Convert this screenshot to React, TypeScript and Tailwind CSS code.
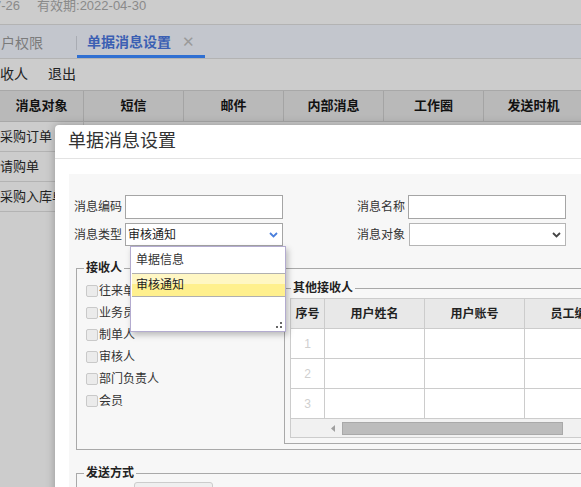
import React from "react";

function Chevron({ color }: { color: string }) {
  return (
    <svg width="9" height="6" viewBox="0 0 9 6" className="shrink-0">
      <path d="M1 1 L4.5 4.5 L8 1" fill="none" stroke={color} strokeWidth="1.8" />
    </svg>
  );
}

function Check({ label }: { label: string }) {
  return (
    <div className="h-[22px] flex items-center">
      <span className="w-[12px] h-[12px] rounded-[2px] border border-[#c9c9c9] bg-[#ebebeb] shrink-0" />
      <span className="ml-[1px] text-[12px] text-[#333] whitespace-nowrap">{label}</span>
    </div>
  );
}

export default function App() {
  const bgCols = [
    { t: "消息对象", w: "w-[84px]" },
    { t: "短信", w: "w-[100px]" },
    { t: "邮件", w: "w-[100px]" },
    { t: "内部消息", w: "w-[100px]" },
    { t: "工作圈", w: "w-[100px]" },
    { t: "发送时机", w: "w-[100px]" },
  ];
  return (
    <div className="relative w-[581px] h-[487px] overflow-hidden bg-[#cccccc] font-['Liberation_Sans','Noto_Sans_CJK_SC',sans-serif] text-[#333]">
      {/* top strip */}
      <div className="h-[24px] flex items-start text-[13px] leading-[12px] text-[#8a8a8a] ml-[-6px] gap-[17px] whitespace-nowrap">
        <span>7-26</span>
        <span>有效期:2022-04-30</span>
      </div>
      {/* tab bar */}
      <div className="h-[35px] border-t border-b border-[#b3b3b3] bg-[#c3c6cd] flex items-stretch">
        <div className="w-[76px] flex items-center pt-[3px] text-[14px] text-[#7b7b7b] pl-[1px] whitespace-nowrap">户权限</div>
        <div className="w-px h-[14px] bg-[#a9acb3] self-center mt-[3px]" />
        <div className="w-[128px] flex items-center pt-[5px] pl-[10px] border-b-[3px] border-[#2f6fd2] text-[14px] text-[#3b5fb3] font-bold whitespace-nowrap">
          <span>单据消息设置</span>
          <span className="ml-[11px] text-[15px] font-normal text-[#9a9a9a]">✕</span>
        </div>
      </div>
      {/* toolbar */}
      <div className="h-[31px] flex items-center gap-[20px] text-[14px] text-[#222] whitespace-nowrap">
        <span>收人</span>
        <span>退出</span>
      </div>
      {/* table header */}
      <div className="h-[32px] flex bg-[#b9b9b9] border-t border-b border-[#a8a8a8]">
        {bgCols.map((c) => (
          <div key={c.t} className={`${c.w} shrink-0 border-r border-[#a4a4a4] flex items-center justify-center text-[13px] font-bold text-[#111] whitespace-nowrap`}>
            {c.t}
          </div>
        ))}
      </div>
      {["采购订单", "请购单", "采购入库单"].map((r) => (
        <div key={r} className="h-[30px] flex border-b border-[#b3b3b3]">
          <div className="w-[84px] shrink-0 border-r border-[#b3b3b3] flex items-center text-[13px] text-[#222] whitespace-nowrap">{r}</div>
        </div>
      ))}

      {/* modal */}
      <div className="absolute left-[55px] top-[125px] w-[560px] h-[400px] bg-white rounded-[4px] shadow-[0_0_10px_rgba(0,0,0,0.28)]">
        <div className="h-[34px] pl-[13px] flex items-center text-[18px] text-[#333] border-b border-[#e3e3e3]">单据消息设置</div>
        <div className="pt-[15px] pl-[14px]">
          <div className="bg-[#f7f7f7] h-[360px] pt-[21px] pl-[5px]">
            {/* row 1 */}
            <div className="flex items-center h-[24px]">
              <span className="w-[48px] text-[12px] text-[#333] whitespace-nowrap">消息编码</span>
              <div className="ml-[3px] w-[158px] h-[24px] border border-[#a5a5a5] bg-white" />
              <span className="ml-[74px] w-[48px] text-[12px] text-[#333] whitespace-nowrap">消息名称</span>
              <div className="ml-[3px] w-[158px] h-[24px] border border-[#a5a5a5] bg-white" />
            </div>
            {/* row 2 */}
            <div className="flex items-center h-[23px] mt-[4px]">
              <span className="w-[48px] text-[12px] text-[#333] whitespace-nowrap">消息类型</span>
              <div className="ml-[3px] w-[158px] h-[23px] border border-[#a5a5a5] bg-white flex items-center pl-[2px] pr-[4px] text-[12px] text-[#222]">
                <span className="flex-1">审核通知</span>
                <Chevron color="#4a7fdc" />
              </div>
              <span className="ml-[74px] w-[48px] text-[12px] text-[#333] whitespace-nowrap">消息对象</span>
              <div className="ml-[4px] w-[157px] h-[23px] border border-[#b5b5b5] bg-white flex items-center justify-end pr-[4px]">
                <Chevron color="#444" />
              </div>
            </div>
            {/* 接收人 fieldset */}
            <fieldset className="mt-[14px] ml-[2px] w-[520px] border border-[#a9a9a9] pb-[5px]">
              <legend className="ml-[7px] px-[2px] text-[12px] leading-[16px] font-bold text-[#222]">接收人</legend>
              <div className="flex">
                <div className="w-[207px] shrink-0 pl-[9px] pt-[4px]">
                  <Check label="往来单位" />
                  <Check label="业务员" />
                  <Check label="制单人" />
                  <Check label="审核人" />
                  <Check label="部门负责人" />
                  <Check label="会员" />
                </div>
                <fieldset className="mt-[4px] flex-1 border border-[#a9a9a9] pl-[5px] pb-[5px]">
                  <legend className="ml-[1px] px-[2px] text-[12px] leading-[16px] font-bold text-[#222]">其他接收人</legend>
                  <div className="mt-[2px] border border-[#cccccc] w-[330px]">
                    <div className="flex h-[30px] bg-[#e8e8e8] border-b border-[#cccccc] text-[12px] font-bold text-[#222]">
                      <div className="w-[34px] shrink-0 border-r border-[#cccccc] flex items-center justify-center">序号</div>
                      <div className="w-[100px] shrink-0 border-r border-[#cccccc] flex items-center justify-center">用户姓名</div>
                      <div className="w-[100px] shrink-0 border-r border-[#cccccc] flex items-center justify-center">用户账号</div>
                      <div className="w-[100px] shrink-0 border-r border-[#cccccc] flex items-center justify-center">员工编号</div>
                    </div>
                    {["1", "2", "3"].map((n) => (
                      <div key={n} className="flex h-[30px] bg-white border-b border-[#cccccc]">
                        <div className="w-[34px] shrink-0 border-r border-[#cccccc] flex items-center justify-center text-[12px] text-[#cfcfcf]">{n}</div>
                        <div className="w-[100px] shrink-0 border-r border-[#cccccc]" />
                        <div className="w-[100px] shrink-0 border-r border-[#cccccc]" />
                        <div className="w-[100px] shrink-0 border-r border-[#cccccc]" />
                      </div>
                    ))}
                    <div className="h-[18px] bg-[#f1f1f1] flex items-center">
                      <div className="w-[40px] shrink-0" />
                      <svg width="4" height="7" viewBox="0 0 4 7" className="shrink-0">
                        <path d="M4 0 L0 3.5 L4 7 Z" fill="#a0a0a0" />
                      </svg>
                      <div className="ml-[7px] w-[221px] h-[13px] bg-[#bcbcbc] border border-[#a9a9a9]" />
                    </div>
                  </div>
                </fieldset>
              </div>
            </fieldset>
            {/* 发送方式 */}
            <fieldset className="mt-[15px] ml-[2px] w-[520px] border border-[#a9a9a9] h-[60px]">
              <legend className="ml-[7px] px-[2px] text-[12px] leading-[16px] font-bold text-[#222]">发送方式</legend>
              <div className="ml-[57px] mt-[1px] w-[79px] h-[24px] rounded-[3px] border border-[#cccccc] bg-[#efefef]" />
            </fieldset>
          </div>
        </div>
      </div>

      {/* dropdown list */}
      <div className="absolute left-[130px] top-[246px] w-[156px] h-[86px] bg-white border border-[#b3abcf] shadow-[2px_3px_6px_rgba(0,0,0,0.25)]">
        <div className="h-[26px] pl-[5px] flex items-center text-[12px] text-[#333]">单据信息</div>
        <div className="ml-[1px] h-[24px] border-t border-b border-[#b0b0b0] bg-[linear-gradient(#fff7c4_0%,#fff7c4_45%,#fff08e_45%,#fff08e_100%)] pl-[4px] flex items-center text-[12px] text-[#222]">审核通知</div>
        <svg width="6" height="6" viewBox="0 0 6 6" className="absolute right-[3px] bottom-[3px]">
          <rect x="4" y="0" width="2" height="2" fill="#666" />
          <rect x="0" y="4" width="2" height="2" fill="#666" />
          <rect x="4" y="4" width="2" height="2" fill="#666" />
        </svg>
      </div>
    </div>
  );
}
